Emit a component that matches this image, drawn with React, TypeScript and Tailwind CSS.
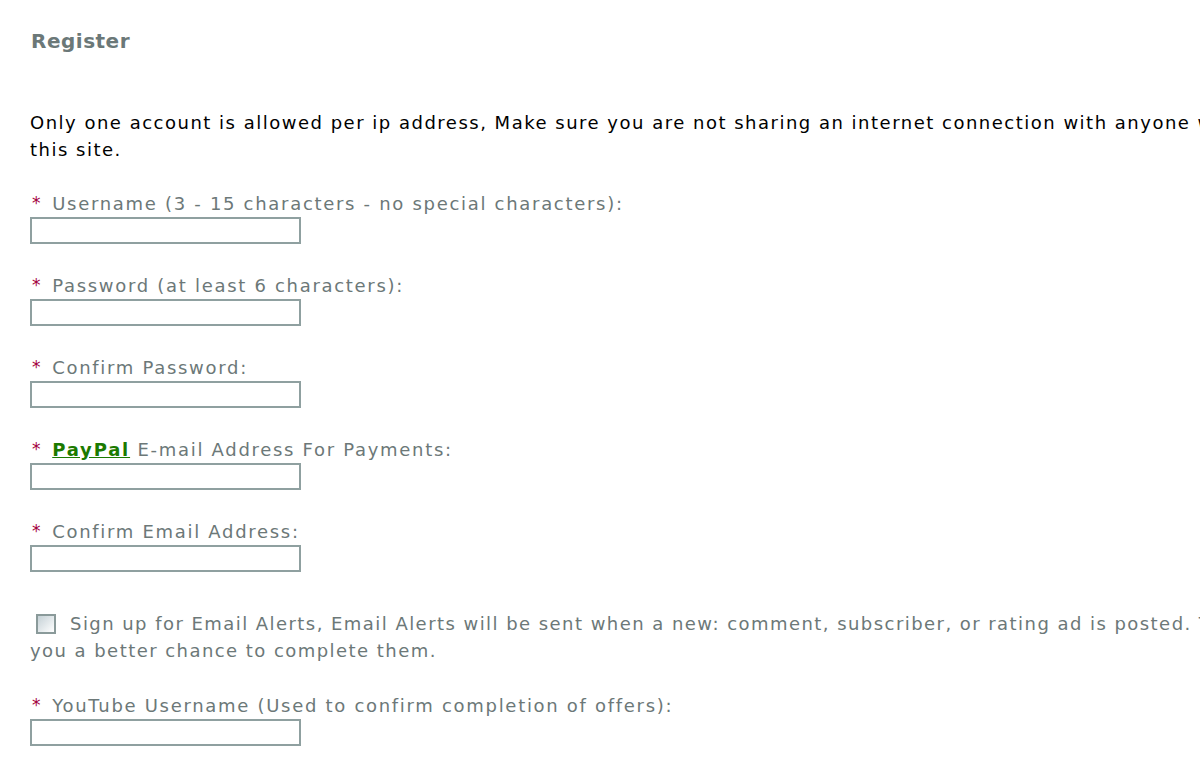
import React from "react";

const font = { fontFamily: '"DejaVu Sans", Verdana, sans-serif' };

function Label({ children }: { children: React.ReactNode }) {
  return (
    <div className="h-[27px] leading-[27px] whitespace-nowrap text-[#6c7878] tracking-[1.7px]">
      <span className="text-[#a3003d] text-[17px] align-top ml-[2px] mr-[10px]">*</span>
      {children}
    </div>
  );
}

function Field({ children }: { children: React.ReactNode }) {
  return (
    <div className="mb-[28px]">
      <Label>{children}</Label>
      <input
        type="text"
        className="block w-[271px] h-[27px] border-2 border-[#8fa0a0] bg-white outline-none"
      />
    </div>
  );
}

export default function App() {
  return (
    <div className="w-[1200px] h-[779px] overflow-hidden bg-white" style={font}>
      <div className="w-[1600px] pl-[31px] pt-[26px] text-[18px] tracking-[1.5px]">
        <h1 className="text-[20px] font-bold text-[#6b7878] leading-[30px] h-[30px] tracking-[0.5px]">Register</h1>
        <p className="mt-[53px] mb-[27px] text-black leading-[27px] whitespace-nowrap -ml-px">
          Only one account is allowed per ip address, Make sure you are not sharing an internet connection with anyone who is also registered on
          <br />
          this site.
        </p>
        <div className="-ml-px">
          <Field>Username (3 - 15 characters - no special characters):</Field>
          <Field>Password (at least 6 characters):</Field>
          <Field>Confirm Password:</Field>
          <Field>
            <a href="#" className="font-bold text-[#1b7a00] underline tracking-[1.8px]">PayPal</a> E-mail Address For Payments:
          </Field>
          <div className="mb-[38px]">
            <Label>Confirm Email Address:</Label>
            <input
              type="text"
              className="block w-[271px] h-[27px] border-2 border-[#8fa0a0] bg-white outline-none"
            />
          </div>
          <div className="mb-[28px] leading-[27px] text-[#6c7878] whitespace-nowrap tracking-[1.45px]">
            <div className="flex items-center h-[27px]">
              <span className="ml-[6px] mr-[14px] w-[20px] h-[20px] border-2 border-[#8a9a9a] bg-gradient-to-br from-[#c5d1d6] to-white inline-block" />
              Sign up for Email Alerts, Email Alerts will be sent when a new: comment, subscriber, or rating ad is posted. This will give
            </div>
            <div>you a better chance to complete them.</div>
          </div>
          <Field>YouTube Username (Used to confirm completion of offers):</Field>
          <Field>How did you hear about our site (optional referral):</Field>
        </div>
      </div>
    </div>
  );
}
